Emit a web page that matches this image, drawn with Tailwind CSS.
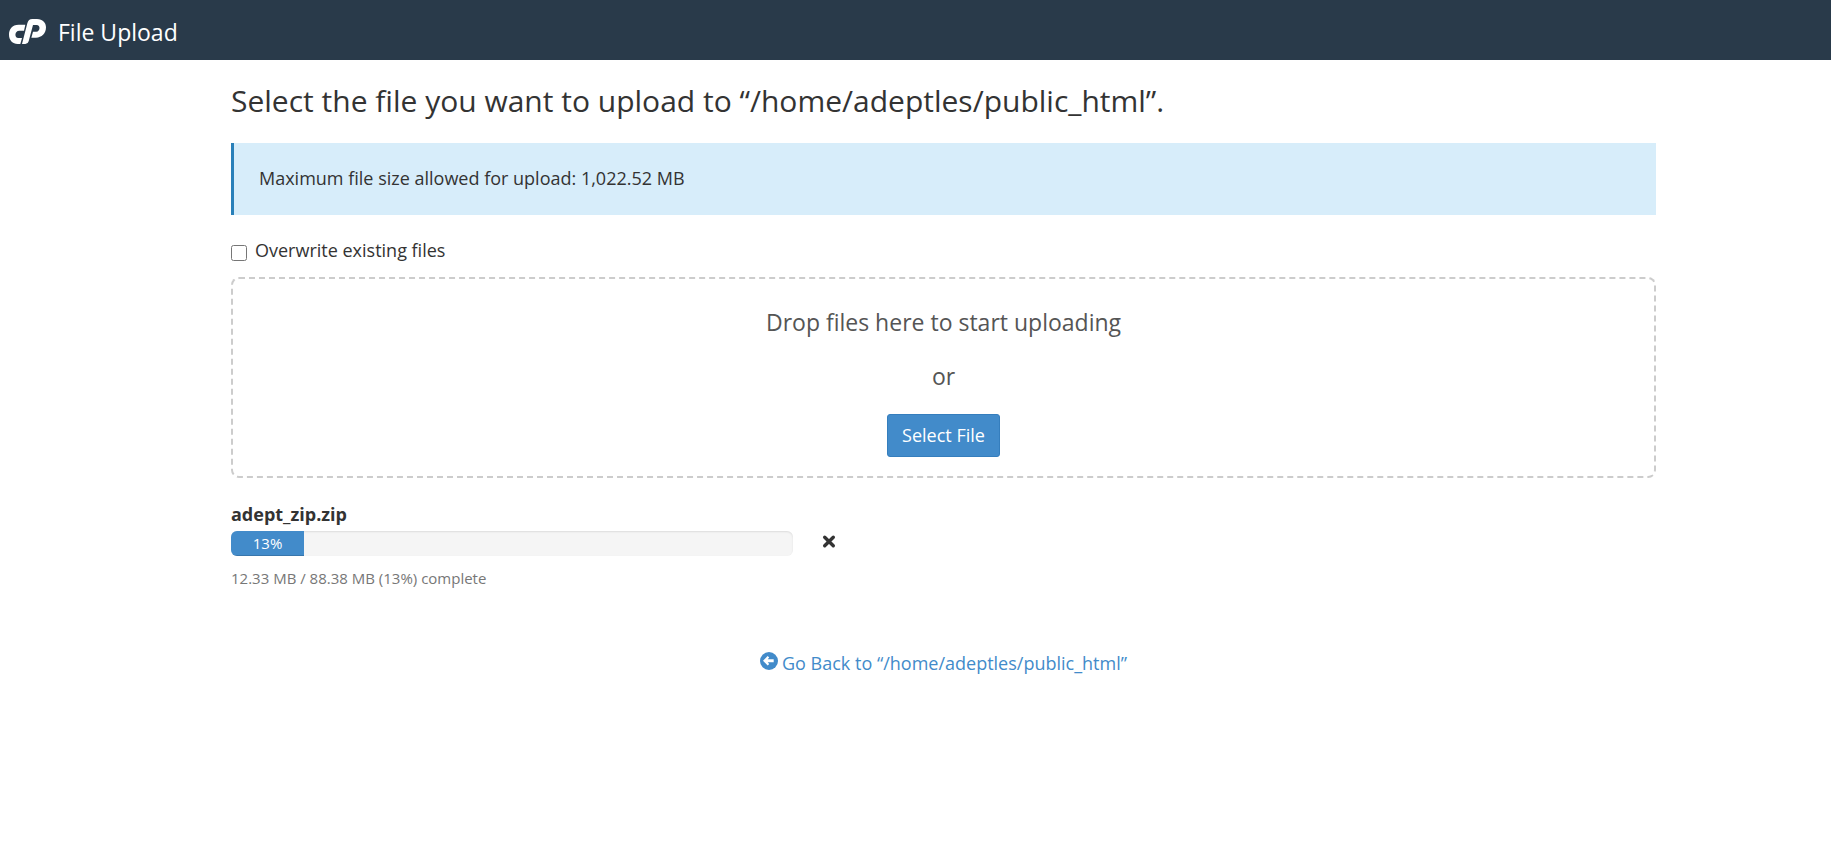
<!DOCTYPE html>
<html lang="en">
<head>
<meta charset="utf-8">
<meta name="viewport" content="width=device-width, initial-scale=1">
<title>File Upload</title>
<script src="https://cdn.jsdelivr.net/npm/@tailwindcss/browser@4"></script>
</head>
<body class="bg-white font-['Open_Sans',sans-serif] text-lg leading-6 text-[#333333]">
<header class="flex h-15 items-center gap-3 bg-[#293a4a] px-[9px] pt-[3px] text-white">
  <svg class="h-[25px] w-[37px]" viewBox="27 57 111 75" fill="#fff" aria-hidden="true">
    <path d="M76 74H56C36 74 27 88 27 104c0 17 11 27 26 28h8l5-18H55c-12 0-12-22 3-22h14z"/>
    <path d="M66 132 82 70q3-13 15-13h14c17 0 27 11 27 25 0 18-13 31-30 31H94l5-18h10c12 0 13-20 1-20h-11L86 124q-2 8-10 8z"/>
  </svg>
  <h1 class="text-[23px]">File Upload</h1>
</header>
<main class="pt-[19px] pr-[175px] pl-[231px]">
  <h2 class="text-3xl leading-[43px]">Select the file you want to upload to “/home/adeptles/public_html”.</h2>
  <div class="mt-[21px] border-l-3 border-[#2980b9] bg-[#d7edfa] px-[25px] pt-[23px] pb-[25px]" role="status">Maximum file size allowed for upload: 1,022.52 MB</div>
  <div class="mt-[23px] flex items-start gap-2">
    <input id="overwrite" type="checkbox" class="mt-[7px] size-4">
    <label for="overwrite">Overwrite existing files</label>
  </div>
  <section class="mt-[15px] flex flex-col items-center rounded-lg border-2 border-dashed border-[#cccccc] pt-6 pb-[19px] text-[23px] text-[#555555]">
    <p class="leading-[38px]">Drop files here to start uploading</p>
    <p class="mt-4 leading-[38px]">or</p>
    <button type="button" class="mt-[19px] rounded-[3px] border border-[#357ebd] bg-[#428bca] px-[14px] py-2 text-lg leading-[25px] text-white">Select File</button>
  </section>
  <section class="mt-6">
    <h3 class="font-bold">adept_zip.zip</h3>
    <div class="flex items-start gap-7">
      <div class="mt-[5px] h-[25px] w-[562px] overflow-hidden rounded-md bg-[#f5f5f5] shadow-[inset_0_1px_2px_#0000001a]" role="progressbar" aria-label="adept_zip.zip" aria-valuenow="13" aria-valuemin="0" aria-valuemax="100">
        <div class="h-full bg-[#428bca] text-center text-[15px] leading-[25px] text-white shadow-[inset_0_-1px_0_#00000026]" style="width:13%">13%</div>
      </div>
      <button type="button" aria-label="Cancel upload" class="mt-1 py-1">
        <svg class="size-4" viewBox="0 0 16 16" fill="none" stroke="#333" stroke-width="3.4" stroke-linecap="round" aria-hidden="true"><path d="m3.7 3.2 8.6 8.6M12.3 3.2l-8.6 8.6"/></svg>
      </button>
    </div>
    <p class="mt-[10px] text-[15px] text-[#777777]">12.33 MB / 88.38 MB (13%) complete</p>
  </section>
  <div class="mt-[61px] flex justify-center">
    <a href="#" class="flex items-start gap-1 text-[#428bca]">
      <svg class="mt-px size-[18px]" viewBox="0 0 18 18" aria-hidden="true"><circle cx="9" cy="9" r="9" fill="#428bca"/><path d="M3 8.7 7.7 4l1.5 1.4L7.7 7.2h6v3h-6l1.5 1.9-1.5 1.4z" fill="#fff"/></svg>
      Go Back to “/home/adeptles/public_html”</a>
  </div>
</main>
</body>
</html>
